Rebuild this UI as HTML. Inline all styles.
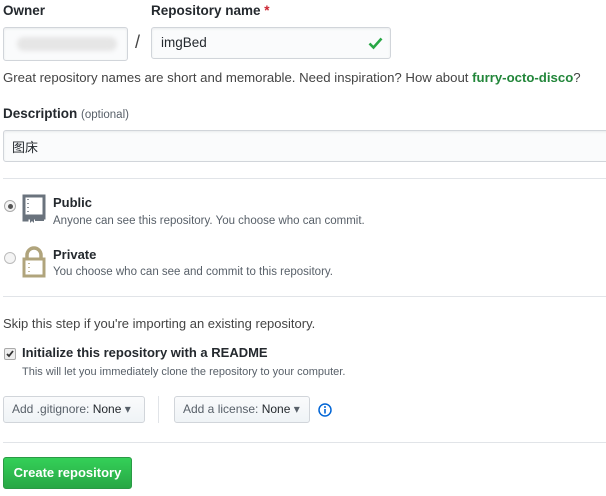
<!DOCTYPE html><html><head><meta charset="utf-8"><style>
body{margin:0;width:606px;height:496px;overflow:hidden;background:#fff;font-family:"Liberation Sans","Noto Sans CJK SC",sans-serif;color:#24292e;font-size:13px;position:relative}
.a{position:absolute;white-space:nowrap}
.b{font-weight:bold}
.inp{position:absolute;border:1px solid #d1d5da;border-radius:3px;background:#fafbfc;box-shadow:inset 0 1px 2px rgba(27,31,35,.075)}
.hr{position:absolute;left:3px;right:0;height:1px;background:#e1e4e8}
.btn{position:absolute;white-space:nowrap;border:1px solid #d1d5da;border-radius:3px;background:linear-gradient(#fafbfc,#eff3f6);font-size:12px;color:#586069;padding:0 8px;box-sizing:border-box}
.g{color:#586069;font-size:11.5px}
</style></head><body>
<div class="a b" style="left:3px;top:3px;font-size:13.5px">Owner</div>
<div class="a b" style="left:151px;top:3px;font-size:13.5px">Repository name <span style="color:#cb2431">*</span></div>
<div class="inp" style="left:3px;top:27px;width:123px;height:32px"><div style="position:absolute;left:13px;top:9px;width:100px;height:14px;background:#e6e6e6;border-radius:7px;filter:blur(2px)"></div></div>
<div class="a" style="left:135px;top:32px;font-size:18px;color:#444">/</div>
<div class="inp" style="left:151px;top:27px;width:238px;height:30px"><div class="a" style="left:9px;top:7px;font-size:13.5px">imgBed</div>
<svg class="a" style="left:216px;top:8px" width="15" height="14" viewBox="0 0 15 14"><path d="M1.5 7.5l4 4L13.5 2.5" stroke="#28a745" stroke-width="2.6" fill="none"/></svg></div>
<div class="a" style="left:3px;top:70px;font-size:13.2px;color:#444">Great repository names are short and memorable. Need inspiration? How about <span class="b" style="color:#22863a">furry-octo-disco</span>?</div>
<div class="a b" style="left:3px;top:106px;font-size:13.5px">Description <span style="font-weight:normal;font-size:11.5px;color:#586069">(optional)</span></div>
<div class="inp" style="left:3px;top:130px;width:610px;height:30px"><div class="a" style="left:8px;top:6px;font-size:13px">图床</div></div>
<div class="hr" style="top:178px"></div>
<div class="a" style="left:4px;top:200px;width:10px;height:10px;border:1px solid #aaa;border-radius:50%;background:#f4f4f4"><div style="margin:2.5px;width:5px;height:5px;border-radius:50%;background:#555"></div></div>
<svg class="a" style="left:22px;top:194px" width="24" height="30" viewBox="0 0 24 30"><path d="M2 2h20v22H5v2H2zM2 22h20" fill="none" stroke="#6a737d" stroke-width="3"/><path d="M6 5v1M6 9v1M6 13v1M6 17v1" stroke="#6a737d" stroke-width="1.5"/><path d="M8 24v5l2-2 2 2v-5" fill="#6a737d"/><path d="M13 26h9" stroke="#6a737d" stroke-width="2"/></svg>
<div class="a b" style="left:53px;top:195px;font-size:13px">Public</div>
<div class="a g" style="left:53px;top:215px">Anyone can see this repository. You choose who can commit.</div>
<div class="a" style="left:4px;top:252px;width:10px;height:10px;border:1px solid #bbb;border-radius:50%;background:#f4f4f4"></div>
<svg class="a" style="left:22px;top:246px" width="24" height="32" viewBox="0 0 24 32"><path d="M5 13V9a7 7 0 0 1 14 0v4" fill="none" stroke="#b0a47c" stroke-width="3.5"/><rect x="2" y="13" width="20" height="17" fill="none" stroke="#b0a47c" stroke-width="3"/><path d="M7 17v1M7 21v1M7 25v1" stroke="#b0a47c" stroke-width="1.5"/></svg>
<div class="a b" style="left:53px;top:247px;font-size:13px">Private</div>
<div class="a g" style="left:53px;top:266px">You choose who can see and commit to this repository.</div>
<div class="hr" style="top:296px"></div>
<div class="a" style="left:3px;top:316px;font-size:13px;color:#444">Skip this step if you're importing an existing repository.</div>
<div class="a" style="left:4px;top:348px;width:10px;height:10px;border:1px solid #aaa;border-radius:2px;background:#eee"><svg width="10" height="10" style="display:block"><path d="M2 5l2 2 4-5" stroke="#333" stroke-width="1.8" fill="none"/></svg></div>
<div class="a b" style="left:22px;top:345px;font-size:13px">Initialize this repository with a README</div>
<div class="a g" style="left:22px;top:366px;font-size:11px">This will let you immediately clone the repository to your computer.</div>
<div class="btn" style="left:3px;top:396px;width:142px;height:27px;line-height:25px">Add .gitignore: <span style="color:#24292e">None</span> ▾</div>
<div class="a" style="left:158px;top:396px;width:1px;height:27px;background:#e1e4e8"></div>
<div class="btn" style="left:174px;top:396px;width:136px;height:27px;line-height:25px">Add a license: <span style="color:#24292e">None</span> ▾</div>
<svg class="a" style="left:318px;top:403px" width="14" height="14" viewBox="0 0 14 14"><circle cx="7" cy="7" r="6" fill="none" stroke="#0366d6" stroke-width="1.5"/><path d="M7 6v4.5" stroke="#0366d6" stroke-width="1.6"/><circle cx="7" cy="4" r="1" fill="#0366d6"/></svg>
<div class="hr" style="top:442px"></div>
<div class="a b" style="left:3px;top:457px;width:129px;height:32px;line-height:30px;text-align:center;border-radius:3px;background:linear-gradient(#34d058,#28a745);color:#fff;font-size:13px;border:1px solid #2a9a45;box-sizing:border-box">Create repository</div>
</body></html>
